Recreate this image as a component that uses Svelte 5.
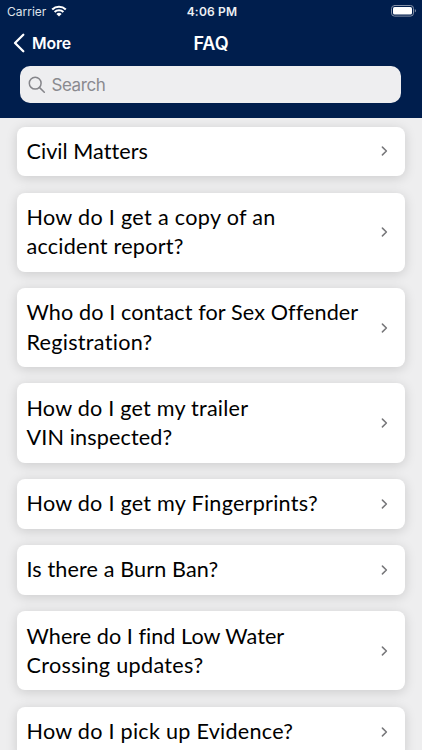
<script>
  // every line carries its own tracking in px
  const questions = [
    [['Civil Matters', 0.04]],
    [['How do I get a copy of an', 0.31], ['accident report?', 0.23]],
    [['Who do I contact for Sex Offender', 0.11], ['Registration?', 0.27]],
    [['How do I get my trailer', 0.22], ['VIN inspected?', 0.13]],
    [['How do I get my Fingerprints?', 0.25]],
    [['Is there a Burn Ban?', 0.12]],
    [['Where do I find Low Water', 0.04], ['Crossing updates?', 0.33]],
    [['How do I pick up Evidence?', 0.26]],
  ];

  let search = $state('');
</script>

<div class="screen">
  <header>
    <div class="status">
      <div class="carrier">
        <span>Carrier</span>
        <svg class="wifi" viewBox="0 0 16 12">
          <path d="M1.2 4.5a9.8 9.8 0 0 1 13.6 0" />
          <path d="M3.6 7a6.3 6.3 0 0 1 8.8 0" />
          <path class="dot" d="M8 11.5 5.4 8.9a3.8 3.8 0 0 1 5.2 0z" />
        </svg>
      </div>
      <span class="time">4:06 PM</span>
      <svg class="battery" viewBox="0 0 26 12">
        <rect class="shell" x="0.5" y="0.5" width="22" height="10.6" rx="3" />
        <rect class="level" x="2" y="2" width="19" height="7.6" rx="1.6" />
        <path class="tip" d="M23.8 4c1.6.6 1.6 3 0 3.6z" />
      </svg>
    </div>

    <nav>
      <button class="back">
        <svg viewBox="0 0 12 20"><path d="M10.3 1.8 2 10l8.3 8.2" /></svg>
        <span>More</span>
      </button>
      <h1>FAQ</h1>
    </nav>

    <label class="search">
      <svg viewBox="0 0 18 18">
        <circle cx="7.2" cy="7.2" r="5.9" />
        <path d="m11.6 11.6 4.7 4.7" />
      </svg>
      <input type="text" placeholder="Search" bind:value={search} />
    </label>
  </header>

  <main>
    {#each questions as lines}
      <button class="card">
        <span class="question">
          {#each lines as [line, tracking]}
            <span style:letter-spacing="{tracking}px">{line}</span>
          {/each}
        </span>
        <svg viewBox="0 0 8 12"><path d="M1.4 2.1 5.4 6l-4 3.9" /></svg>
      </button>
    {/each}
  </main>
</div>

<style>
  :global(body) {
    overflow: hidden;
  }

  .screen {
    display: flex;
    flex-direction: column;
    height: 750px;
    overflow: hidden;
    background: #eeeeef;
    font-family: Inter, "Liberation Sans", sans-serif;
  }

  button {
    border: none;
    padding: 0;
    background: none;
    font: inherit;
    text-align: left;
  }

  svg {
    display: block;
    flex: none;
    fill: none;
    stroke-linecap: round;
    stroke-linejoin: round;
  }

  header {
    flex: none;
    box-sizing: border-box;
    height: 118px;
    background: #001e4d;
    color: #fff;
  }

  .status {
    display: grid;
    grid-template-columns: 1fr auto 1fr;
    align-items: center;
    height: 22px;
    padding: 0 5px 0 7px;
    font-size: 12px;
  }

  .carrier {
    display: flex;
    align-items: center;
    gap: 5px;
    color: #dfe3ea;
  }

  .wifi {
    width: 16px;
    height: 12px;
    margin-top: -1px;
    stroke: #fff;
    stroke-width: 2.1;
    stroke-linecap: butt;
  }

  .wifi .dot {
    fill: #fff;
    stroke: none;
  }

  .time {
    font-weight: 600;
    letter-spacing: 0.2px;
    color: #eef0f4;
  }

  .battery {
    justify-self: end;
    width: 26px;
    height: 12px;
    margin-top: -1px;
  }

  .shell {
    stroke: #8490a7;
  }

  .level {
    fill: #fff;
  }

  .tip {
    fill: #8490a7;
  }

  nav {
    display: grid;
    grid-template-columns: 1fr auto 1fr;
    align-items: center;
    height: 42px;
    padding: 0 13px;
  }

  .back {
    display: flex;
    align-items: center;
    gap: 7px;
    color: #fff;
    font-size: 15.8px;
    font-weight: 600;
    letter-spacing: -0.1px;
  }

  .back svg {
    width: 12px;
    height: 20px;
    stroke: #fff;
    stroke-width: 2.3;
  }

  h1 {
    margin: 0;
    font-size: 18px;
    font-weight: 600;
  }

  .search {
    display: flex;
    align-items: center;
    gap: 5px;
    box-sizing: border-box;
    height: 37px;
    margin: 2.3px 21px 0 20.4px;
    padding: 0 8px;
    border-radius: 10px;
    background: #eeeef0;
  }

  .search svg {
    width: 18px;
    height: 18px;
    stroke: #85858a;
    stroke-width: 1.5;
  }

  input {
    flex: 1;
    min-width: 0;
    border: none;
    padding: 0;
    outline: none;
    background: none;
    font: 17px Inter, "Liberation Sans", sans-serif;
    letter-spacing: -0.4px;
  }

  input::placeholder {
    color: #8a8a8f;
    opacity: 1;
  }

  main {
    display: flex;
    flex-direction: column;
    gap: 16.3px;
    padding: 8.5px 17px 0;
  }

  .card {
    display: flex;
    flex: none;
    align-items: center;
    justify-content: space-between;
    padding: 10.35px 16px 10.35px 9.5px;
    border-radius: 8px;
    background: #fff;
    box-shadow: 0 2px 12px rgba(0, 0, 0, 0.15);
    color: #000;
    font: 21.6px/29.2px Lato, "Open Sans", sans-serif;
  }

  .question span {
    display: block;
    white-space: nowrap;
    font-variant-ligatures: none;
  }

  .card svg {
    width: 8px;
    height: 12px;
    stroke: #77777a;
    stroke-width: 1.5;
  }
</style>
